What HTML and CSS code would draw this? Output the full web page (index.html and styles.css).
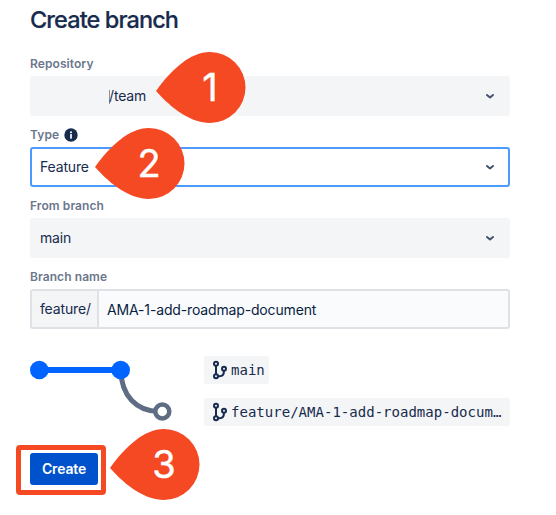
FILE: index.html
```html
<!DOCTYPE html>
<html lang="en">
<head>
<meta charset="utf-8">
<title>Create branch</title>
<link rel="stylesheet" href="styles.css">
</head>
<body>
<svg class="defs" width="0" height="0" aria-hidden="true">
  <symbol id="chevron" viewBox="0 0 10 8"><path d="M2 3 5 5.500 8 3" fill="none" stroke="#42526e" stroke-width="2" stroke-linecap="round" stroke-linejoin="round"/></symbol>
  <symbol id="branch" viewBox="0 0 16 20"><g fill="none" stroke="#172b4d" stroke-width="2"><path d="M4 5v9M6 16.300h1.500c3 0 4.500-2 4.500-5.500"/><circle cx="4" cy="3.700" r="2"/><circle cx="4" cy="16.300" r="2"/><circle cx="12" cy="8.700" r="2"/></g></symbol>
  <symbol id="pin" viewBox="0 0 90 71"><path d="M0 39C15 18 34 0 54 0A35.500 35.500 0 0 1 54 71C35 71 16 57 0 39Z" fill="#f54924"/></symbol>
</svg>
<main class="form">
  <h1>Create branch</h1>
  <section class="field">
    <label>Repository</label>
    <div class="select repository"><span><i class="caret"></i>/team</span><svg class="chevron"><use href="#chevron"/></svg></div>
  </section>
  <section class="field">
    <label>Type <svg class="info" viewBox="0 0 14 14"><circle cx="7" cy="7" r="6.700" fill="#172b4d"/><circle cx="7" cy="4.300" r="1" fill="#fff"/><path d="M7 6.700V10" stroke="#fff" stroke-width="1.700" stroke-linecap="round"/></svg></label>
    <div class="select focused"><span>Feature</span><svg class="chevron"><use href="#chevron"/></svg></div>
  </section>
  <section class="field">
    <label>From branch</label>
    <div class="select"><span>main</span><svg class="chevron"><use href="#chevron"/></svg></div>
  </section>
  <section class="field">
    <label>Branch name</label>
    <div class="input"><span class="prefix">feature/</span><span class="value">AMA-1-add-roadmap-document</span></div>
  </section>
  <section class="preview">
    <svg class="graph" viewBox="0 0 174 70">
      <path d="M91 14C91 40 107 55.500 129 55.500" fill="none" stroke="#5e6c84" stroke-width="5"/>
      <path d="M9 14H91" stroke="#0065ff" stroke-width="6"/>
      <circle cx="9.300" cy="14" r="9.300" fill="#0065ff"/><circle cx="90.700" cy="14" r="9.300" fill="#0065ff"/>
      <circle cx="132.300" cy="55.500" r="7" fill="#fff" stroke="#5e6c84" stroke-width="4.500"/>
    </svg>
    <div class="tags">
      <div class="tag"><svg><use href="#branch"/></svg><span>main</span></div>
      <div class="tag"><svg><use href="#branch"/></svg><span>feature/AMA-1-add-roadmap-docum…</span></div>
    </div>
  </section>
  <div class="highlight"><button>Create</button></div>
</main>
<div class="pin one"><svg><use href="#pin"/></svg><b>1</b></div>
<div class="pin two"><svg><use href="#pin"/></svg><b>2</b></div>
<div class="pin three"><svg><use href="#pin"/></svg><b>3</b></div>
</body>
</html>
```
FILE: styles.css
```css
* { box-sizing: border-box; }
body { margin: 0; background: #fff; color: #172b4d; font: 14px/20px Inter, sans-serif; letter-spacing: -0.15px; overflow: hidden; }
.defs { position: absolute; }
.form { width: 510px; padding: 6px 0 0 30px; }
h1 { margin: 0 0 22px; font-size: 23.5px; line-height: 28px; font-weight: 500; letter-spacing: -0.9px; -webkit-text-stroke: 0.2px #172b4d; }
.field { height: 71px; }
label { display: flex; align-items: center; gap: 5px; height: 16px; margin-bottom: 4px; color: #6b778c; font-size: 12px; line-height: 16px; font-weight: 600; letter-spacing: 0.08px; }
.info { width: 14px; height: 14px; }
.select { display: flex; align-items: center; justify-content: space-between; height: 40px; padding: 0 15px 0 10px; background: #f4f5f7; border-radius: 3px; }
.repository { padding-left: 79px; }
.caret { display: inline-block; width: 1px; height: 14px; margin-right: -1px; background: #8993a4; vertical-align: -3px; }
.focused { background: #fff; border: 2px solid #4c9aff; padding: 0 13px 0 8px; }
.chevron { width: 10px; height: 8px; }
.input { display: flex; height: 40px; border: 2px solid #dfe1e6; border-radius: 3px; background: #fafbfc; }
.prefix { width: 67px; padding: 8px 0 0 8px; background: #f4f5f7; border-right: 2px solid #dfe1e6; }
.value { padding: 9px 0 0 8px; color: #091e42; }
.preview { display: flex; height: 70px; margin-top: 16px; }
.graph { width: 174px; height: 70px; flex: none; }
.tags { display: flex; flex-direction: column; align-items: flex-start; gap: 14px; }
.tag { display: flex; align-items: center; height: 28px; padding: 0 4px 0 8px; background: #f4f5f7; border-radius: 3px; font: 14px/20px "DejaVu Sans Mono", monospace; letter-spacing: 0.02px; white-space: nowrap; }
.tag svg { width: 16px; height: 20px; margin-right: 3px; }
.tag:last-child { width: 306px; }
.highlight { display: flex; width: 90px; height: 50px; margin: 19px 0 0 -14px; padding: 3px 0 0 9px; border: 5px solid #f54924; border-radius: 4px; }
button { width: 68px; height: 32px; padding: 0; border: 0; border-radius: 3px; background: #0052cc; color: #fff; font: 600 14px/32px Inter, sans-serif; letter-spacing: -0.15px; }
.pin { position: absolute; width: 90px; height: 71px; }
.pin svg { position: absolute; width: 90px; height: 71px; }
.pin b { position: absolute; left: 34px; top: 12px; width: 40px; text-align: center; color: #fff; font: 400 38px/46px Inter, sans-serif; -webkit-text-stroke: 0.4px #fff; letter-spacing: 0; }
.one { left: 156px; top: 52px; }
.two { left: 95px; top: 128px; }
.three { left: 110px; top: 429px; }
```
